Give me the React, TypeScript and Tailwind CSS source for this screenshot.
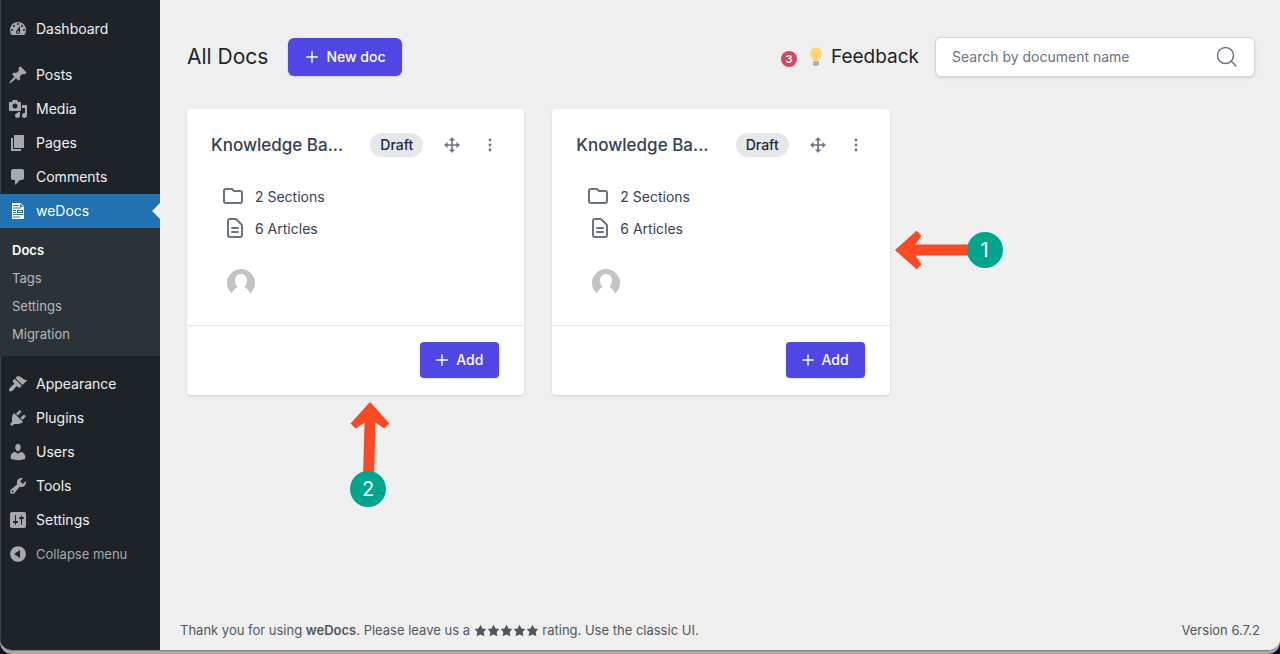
import React from 'react';

type MenuItem = { label: string; icon: string };

const ICONS = {
  dashboard:
    'M3.76 16h12.48c1.1-1.37 1.76-3.11 1.76-5 0-4.42-3.58-8-8-8s-8 3.58-8 8c0 1.89.66 3.63 1.76 5zM10 4c.55 0 1 .45 1 1s-.45 1-1 1-1-.45-1-1 .45-1 1-1zM6 6c.55 0 1 .45 1 1s-.45 1-1 1-1-.45-1-1 .45-1 1-1zm8 0c.55 0 1 .45 1 1s-.45 1-1 1-1-.45-1-1 .45-1 1-1zm-5.37 5.55L12 7v6c0 1.1-.9 2-2 2s-2-.9-2-2c0-.57.24-1.08.63-1.45zM4 10c.55 0 1 .45 1 1s-.45 1-1 1-1-.45-1-1 .45-1 1-1zm12 0c.55 0 1 .45 1 1s-.45 1-1 1-1-.45-1-1 .45-1 1-1zm-5 3c0-.55-.45-1-1-1s-1 .45-1 1 .45 1 1 1 1-.45 1-1z',
  posts:
    'M10.44 3.02l1.82-1.82 6.36 6.35-1.83 1.82c-1.05-.68-2.48-.57-3.41.36l-.75.75c-.92.93-1.04 2.35-.35 3.41l-1.83 1.82-2.41-2.41-2.8 2.79c-.42.42-3.38 2.71-3.8 2.29s1.86-3.39 2.28-3.81l2.79-2.79L4.1 9.36l1.83-1.82c1.05.69 2.48.57 3.4-.36l.75-.75c.93-.92 1.05-2.35.36-3.41z',
  media:
    'M13 11V4c0-.55-.45-1-1-1h-1.67L9 1H5L3.67 3H2c-.55 0-1 .45-1 1v7c0 .55.45 1 1 1h10c.55 0 1-.45 1-1zM7 4.5c1.38 0 2.5 1.12 2.5 2.5S8.38 9.5 7 9.5 4.5 8.38 4.5 7 5.62 4.5 7 4.5zM14 6h5v10.5c0 1.38-1.12 2.5-2.5 2.5S14 17.88 14 16.5s1.12-2.5 2.5-2.5c.17 0 .34.02.5.05V9h-3V6zm-4 8.05V13h2v3.5c0 1.38-1.12 2.5-2.5 2.5S7 17.88 7 16.5 8.12 14 9.5 14c.17 0 .34.02.5.05z',
  pages: 'M6 15V2h10v13H6zm-1 1h8v2H3V5h2v11z',
  comments:
    'M5 2h9c1.1 0 2 .9 2 2v7c0 1.1-.9 2-2 2h-2l-5 5v-5H5c-1.1 0-2-.9-2-2V4c0-1.1.9-2 2-2z',
  wedocs:
    'M4 2h8.500L16 5.500V18H4zM12 2.800V6h3.300zM5 4v1h5.500V4zM5 6.500v1h8v-1zM5 9v1h3V9zM9 9v3h6V9zM10 10h4v1h-4zM5 11v1h3v-1zM5 13v1h10v-1zM5 15.500v1h7v-1z',
  appearance:
    'M14.48 11.06L7.41 3.99l1.5-1.5c.5-.56 2.3-.47 3.51.32 1.21.8 1.43 1.28 2.91 2.1 1.18.64 2.45 1.26 4.45.85zm-.71.71L6.7 4.7 4.93 6.47c-.39.39-.39 1.02 0 1.41l1.06 1.06c.39.39.39 1.03 0 1.42-.6.6-1.43 1.11-2.21 1.69-.35.26-.7.53-1.01.84C1.43 14.23.4 16.08 1.4 17.07c.99 1 2.84-.03 4.18-1.36.31-.31.58-.66.85-1.02.57-.78 1.08-1.61 1.69-2.21.39-.39 1.02-.39 1.41 0l1.06 1.06c.39.39 1.02.39 1.41 0z',
  plugins:
    'M13.11 4.36L9.87 7.6 8 5.73l3.24-3.24c.35-.34 1.05-.2 1.56.32.52.51.66 1.21.31 1.55zm-8 1.77l.91-1.12 9.01 9.01-1.19.84c-.71.71-2.63 1.16-3.82 1.16H6.14L4.9 17.26c-.59.59-1.54.59-2.12 0-.59-.58-.59-1.53 0-2.12l1.24-1.24v-3.88c0-1.13.4-3.19 1.09-3.89zm7.26 3.97l3.24-3.24c.34-.35 1.04-.21 1.55.31.52.51.66 1.21.31 1.55l-3.24 3.25z',
  users:
    'M10 9.25c-2.27 0-2.73-3.44-2.73-3.44C7 4.02 7.82 2 9.97 2c2.16 0 2.98 2.02 2.71 3.81 0 0-.41 3.44-2.68 3.44zm0 2.57L12.72 10c2.39 0 4.52 2.33 4.52 4.53v2.49s-3.65 1.13-7.24 1.13c-3.65 0-7.24-1.13-7.24-1.13v-2.49c0-2.25 1.94-4.48 4.47-4.48z',
  tools:
    'M16.68 9.77c-1.34 1.34-3.3 1.67-4.95.99l-5.41 6.52c-.99.99-2.59.99-3.58 0s-.99-2.59 0-3.57l6.52-5.42c-.68-1.65-.35-3.61.99-4.95 1.28-1.28 3.12-1.62 4.72-1.06l-2.89 2.89 2.82 2.82 2.86-2.87c.53 1.58.18 3.39-1.08 4.65zM3.81 16.21c.4.39 1.04.39 1.43 0 .4-.4.4-1.04 0-1.43-.39-.4-1.03-.4-1.43 0-.39.39-.39 1.03 0 1.43z',
  settings:
    'M18 16V4c0-1.1-.9-2-2-2H4c-1.1 0-2 .9-2 2v12c0 1.1.9 2 2 2h12c1.1 0 2-.9 2-2zM8 11h1c.55 0 1 .45 1 1s-.45 1-1 1H8v1.5c0 .28-.22.5-.5.5s-.5-.22-.5-.5V13H6c-.55 0-1-.45-1-1s.45-1 1-1h1V5.5c0-.28.22-.5.5-.5s.5.22.5.5V11zm5-2h-1c-.55 0-1-.45-1-1s.45-1 1-1h1V5.5c0-.28.22-.5.5-.5s.5.22.5.5V7h1c.55 0 1 .45 1 1s-.45 1-1 1h-1v5.5c0 .28-.22.5-.5.5s-.5-.22-.5-.5V9z',
  collapse:
    'M10 2.16c4.33 0 7.84 3.51 7.84 7.84s-3.51 7.84-7.84 7.84S2.16 14.33 2.16 10 5.71 2.16 10 2.16zm2 11.72V6.12L6.18 9.97z',
  star: 'M10 1l3 6 6 .75-4.12 4.62L16 19l-6-3-6 3 1.13-6.63L1 7.75 7 7z',
};

const CONTENT_ITEMS: MenuItem[] = [
  { label: 'Posts', icon: ICONS.posts },
  { label: 'Media', icon: ICONS.media },
  { label: 'Pages', icon: ICONS.pages },
  { label: 'Comments', icon: ICONS.comments },
];

const ADMIN_ITEMS: MenuItem[] = [
  { label: 'Appearance', icon: ICONS.appearance },
  { label: 'Plugins', icon: ICONS.plugins },
  { label: 'Users', icon: ICONS.users },
  { label: 'Tools', icon: ICONS.tools },
  { label: 'Settings', icon: ICONS.settings },
];

function Dashicon({ path, className }: { path: string; className: string }) {
  return (
    <svg viewBox="0 0 20 20" className={className} fill="currentColor" fillRule="evenodd" aria-hidden="true">
      <path d={path} />
    </svg>
  );
}

function MenuLink({ label, icon }: MenuItem) {
  return (
    <li>
      <a href="#" className="flex h-[34px] items-center gap-2 pl-2 text-[#f0f0f1]">
        <Dashicon path={icon} className="size-5 text-[#a7aaad]" />
        {label}
      </a>
    </li>
  );
}

function Sidebar() {
  return (
    <nav
      aria-label="Admin menu"
      className="w-40 shrink-0 border-l border-[#3c4348] bg-[#1d2327] pt-3 text-sm"
    >
      <ul className="-ml-px">
        <MenuLink label="Dashboard" icon={ICONS.dashboard} />
      </ul>
      <ul className="-ml-px mt-3">
        {CONTENT_ITEMS.map((item) => (
          <MenuLink key={item.label} {...item} />
        ))}
        <li>
          <a href="#" className="flex h-[34px] items-center gap-2 bg-[#2271b1] pl-2 text-white">
            <Dashicon path={ICONS.wedocs} className="size-5" />
            <span className="flex-1">weDocs</span>
            <svg viewBox="0 0 8 16" className="h-4 w-2" fill="#f0f0f1" aria-hidden="true">
              <path d="M8 0v16L0 8z" />
            </svg>
          </a>
          <ul className="bg-[#2c3338] py-2 text-[13px] text-[#b4b9be]">
            {['Docs', 'Tags', 'Settings', 'Migration'].map((label) => (
              <li key={label}>
                <a
                  href="#"
                  className={
                    label === 'Docs'
                      ? 'flex h-7 items-center pl-3 font-semibold text-white'
                      : 'flex h-7 items-center pl-3'
                  }
                >
                  {label}
                </a>
              </li>
            ))}
          </ul>
        </li>
      </ul>
      <ul className="-ml-px mt-[11px]">
        {ADMIN_ITEMS.map((item) => (
          <MenuLink key={item.label} {...item} />
        ))}
        <li>
          <button type="button" className="flex h-[34px] items-center gap-2 pl-2 text-[13px] text-[#a7aaad]">
            <Dashicon path={ICONS.collapse} className="size-5" />
            Collapse menu
          </button>
        </li>
      </ul>
    </nav>
  );
}

function Plus() {
  return (
    <svg viewBox="0 0 12 12" className="size-3" fill="none" stroke="currentColor" strokeWidth="1.4" strokeLinecap="round" aria-hidden="true">
      <path d="M6 .7v10.600M.7 6h10.600" />
    </svg>
  );
}

function Bulb() {
  return (
    <svg viewBox="0 0 14 20" className="h-5 w-3.5" aria-hidden="true">
      <path d="M7 .5C3.400.5 1 3.100 1 6.300c0 2.500 1.400 3.700 2.200 5 .6 1 .7 1.700.9 2.900h5.800c.2-1.200.3-1.900.9-2.900.8-1.300 2.200-2.500 2.200-5C13 3.100 10.600.5 7 .5z" fill="#fdd878" />
      <path d="M4.600 6.300L7 9l2.400-2.700M7 9v5" fill="none" stroke="#f8c63c" strokeWidth="1" />
      <path d="M4 14.200h6v3.300l-1.300 1.700H5.300L4 17.500z" fill="#b4c3cf" />
      <path d="M4 15.700l6-.6M4 17.500l6-.6" stroke="#8197a6" strokeWidth=".7" />
    </svg>
  );
}

function Header() {
  return (
    <header className="flex items-center">
      <h1 className="text-[21px] leading-8 text-[#1d2327]">All Docs</h1>
      <button
        type="button"
        className="ml-5 flex h-[38px] items-center gap-2 rounded-md bg-[#4f46e5] pr-4 pl-[18px] text-sm font-medium text-white shadow-sm"
      >
        <Plus />
        New doc
      </button>
      <a href="#" className="ml-auto flex items-center text-[19px] text-[#1d2327]">
        <span className="mt-1 flex size-4 items-center justify-center rounded-full bg-[#d0485a] text-[11px] font-semibold leading-none text-white">
          3
        </span>
        <span className="ml-3 mr-2">
          <Bulb />
        </span>
        Feedback
      </a>
      <label className="ml-4 flex h-10 w-80 items-center rounded-md border border-gray-300 bg-white px-4 shadow-sm">
        <input
          type="text"
          aria-label="Search by document name"
          placeholder="Search by document name"
          className="min-w-0 flex-1 bg-transparent text-sm text-gray-700 outline-none placeholder:text-gray-500"
        />
        <svg viewBox="0 0 22 22" className="size-[22px]" fill="none" stroke="#6b7280" strokeWidth="1.500" aria-hidden="true">
          <path d="M15.300 15.300L20.500 20.500" />
          <circle cx="9.500" cy="9.500" r="8" />
        </svg>
      </label>
    </header>
  );
}

function MoveIcon() {
  return (
    <svg viewBox="0 0 16 16" className="size-4" aria-hidden="true">
      <path d="M8 2v12M2 8h12" fill="none" stroke="currentColor" strokeWidth="1.600" />
      <path
        d="M8 .4L10.600 3.300H5.400zM8 15.600L5.400 12.700h5.200zM.4 8L3.300 5.400v5.200zM15.600 8l-2.900 2.600V5.400z"
        fill="currentColor"
        stroke="currentColor"
        strokeWidth=".5"
        strokeLinejoin="round"
      />
    </svg>
  );
}

function Outline({ d, className }: { d: string; className: string }) {
  return (
    <svg viewBox="0 0 24 24" className={className} fill="none" stroke="#6b7280" strokeWidth="2" strokeLinecap="round" strokeLinejoin="round" aria-hidden="true">
      <path d={d} />
    </svg>
  );
}

function Avatar() {
  return (
    <svg viewBox="0 0 28 28" className="size-7" role="img" aria-label="Author">
      <path
        d="M14 0a14 14 0 00-9.300 24.500C6.200 21.500 8 19 10.800 17.800 9 16.600 8 14.300 8 11.400 8 7.500 10.500 5 14 5s6 2.500 6 6.400c0 2.900-1 5.200-2.800 6.400 2.800 1.200 4.600 3.700 6.100 6.700A14 14 0 0014 0z"
        fill="#c3c3c3"
      />
    </svg>
  );
}

function DocCard({ children }: { children: React.ReactNode }) {
  return (
    <article className="relative rounded bg-white shadow-sm">
      <div className="flex items-center pt-6 pr-[26px] pl-6">
        <h2 className="min-w-0 flex-1 text-[17px] leading-6 font-medium text-gray-700">Knowledge Ba...</h2>
        <span className="flex h-6 items-center rounded-full bg-gray-200 px-2.5 text-sm font-medium text-gray-800">
          Draft
        </span>
        <button type="button" aria-label="Move" className="ml-[21px] text-gray-500">
          <MoveIcon />
        </button>
        <button type="button" aria-label="More options" className="ml-[22px] text-gray-500">
          <svg viewBox="0 0 16 16" className="size-4" fill="currentColor" aria-hidden="true">
            <circle cx="8" cy="3" r="1.400" />
            <circle cx="8" cy="8" r="1.400" />
            <circle cx="8" cy="13" r="1.400" />
          </svg>
        </button>
      </div>
      <ul className="mt-6 pl-[34px] text-sm text-gray-700">
        <li className="flex h-8 items-center gap-2.5">
          <Outline
            className="size-6"
            d="M3 6v10a2 2 0 002 2h14a2 2 0 002-2V8a2 2 0 00-2-2h-6l-2-2H5a2 2 0 00-2 2z"
          />
          2 Sections
        </li>
        <li className="flex h-8 items-center gap-2 pl-0.5">
          <Outline
            className="size-6"
            d="M9 11h6m-6 4h6m2 5H7a2 2 0 01-2-2V4a2 2 0 012-2h5.586a1 1 0 01.707.293l5.414 5.414a1 1 0 01.293.707V18a2 2 0 01-2 2z"
          />
          6 Articles
        </li>
      </ul>
      <div className="px-10 pt-6 pb-7">
        <Avatar />
      </div>
      <div className="flex justify-end border-t border-gray-200 px-[25px] pt-4 pb-[17px]">
        <button
          type="button"
          className="flex h-9 items-center gap-2 rounded bg-[#4f46e5] px-4 text-sm font-medium text-white shadow-sm"
        >
          <Plus />
          Add
        </button>
      </div>
      {children}
    </article>
  );
}

function UpArrow() {
  return (
    <div className="absolute top-full left-[163px] mt-[7px] flex flex-col items-center">
      <svg viewBox="0 0 40 76" className="-mb-[7px] h-[76px] w-10" fill="#f94a25" aria-hidden="true">
        <path d="M20 0L39.300 21.500 35.500 25.500Q34.500 26.500 33 25.700L25.500 20.500 24 76H13L14.500 20.500 7 25.700Q5.500 26.500 4.500 25.500L.5 21.500z" />
      </svg>
      <span className="relative -left-0.5 flex size-9 items-center justify-center rounded-full bg-[#00a58e] text-xl text-white">
        2
      </span>
    </div>
  );
}

function LeftArrow() {
  return (
    <div className="absolute top-[121px] left-full ml-[5px] flex items-center">
      <svg viewBox="0 0 78 40" className="-mr-1.5 h-10 w-[78px]" fill="#f94a25" aria-hidden="true">
        <path d="M0 20L21.500 .8 25.500 4.500Q26.500 5.500 25.700 7L20.500 14.400H78V25.600H20.500L25.700 33Q26.500 34.500 25.500 35.500L21.500 39.200z" />
      </svg>
      <span className="relative flex size-9 items-center justify-center rounded-full bg-[#00a58e] text-xl text-white">
        1
      </span>
    </div>
  );
}

function Footer() {
  return (
    <footer className="mt-auto flex justify-between pr-5 pb-2.5 pl-5 text-[13px] leading-5 text-[#50575e]">
      <p>
        Thank you for using <strong className="font-semibold">weDocs</strong>. Please leave us a{' '}
        <a href="#" aria-label="five star" className="inline-flex align-[-2px]">
          {[1, 2, 3, 4, 5].map((n) => (
            <Dashicon key={n} path={ICONS.star} className="size-[13px]" />
          ))}
        </a>{' '}
        rating. <a href="#">Use the classic UI.</a>
      </p>
      <p>Version 6.7.2</p>
    </footer>
  );
}

export default function App() {
  return (
    <div className="flex min-h-screen flex-col bg-[#0a1226] font-['Inter',sans-serif]">
      <div className="flex flex-1 flex-col rounded-b-xl bg-[#a9a9a9] pb-[3px]">
        <div className="flex flex-1 overflow-hidden rounded-b-xl border-b border-[#808080] bg-[#f0f0f1]">
          <Sidebar />
          <div className="flex min-w-0 flex-1 flex-col bg-[#efefef]">
            <main className="pt-[37px] pr-[25px] pl-[27px]">
              <Header />
              <div className="mt-8 grid grid-cols-3 gap-7">
                <DocCard>
                  <UpArrow />
                </DocCard>
                <DocCard>
                  <LeftArrow />
                </DocCard>
              </div>
            </main>
            <Footer />
          </div>
        </div>
      </div>
    </div>
  );
}
